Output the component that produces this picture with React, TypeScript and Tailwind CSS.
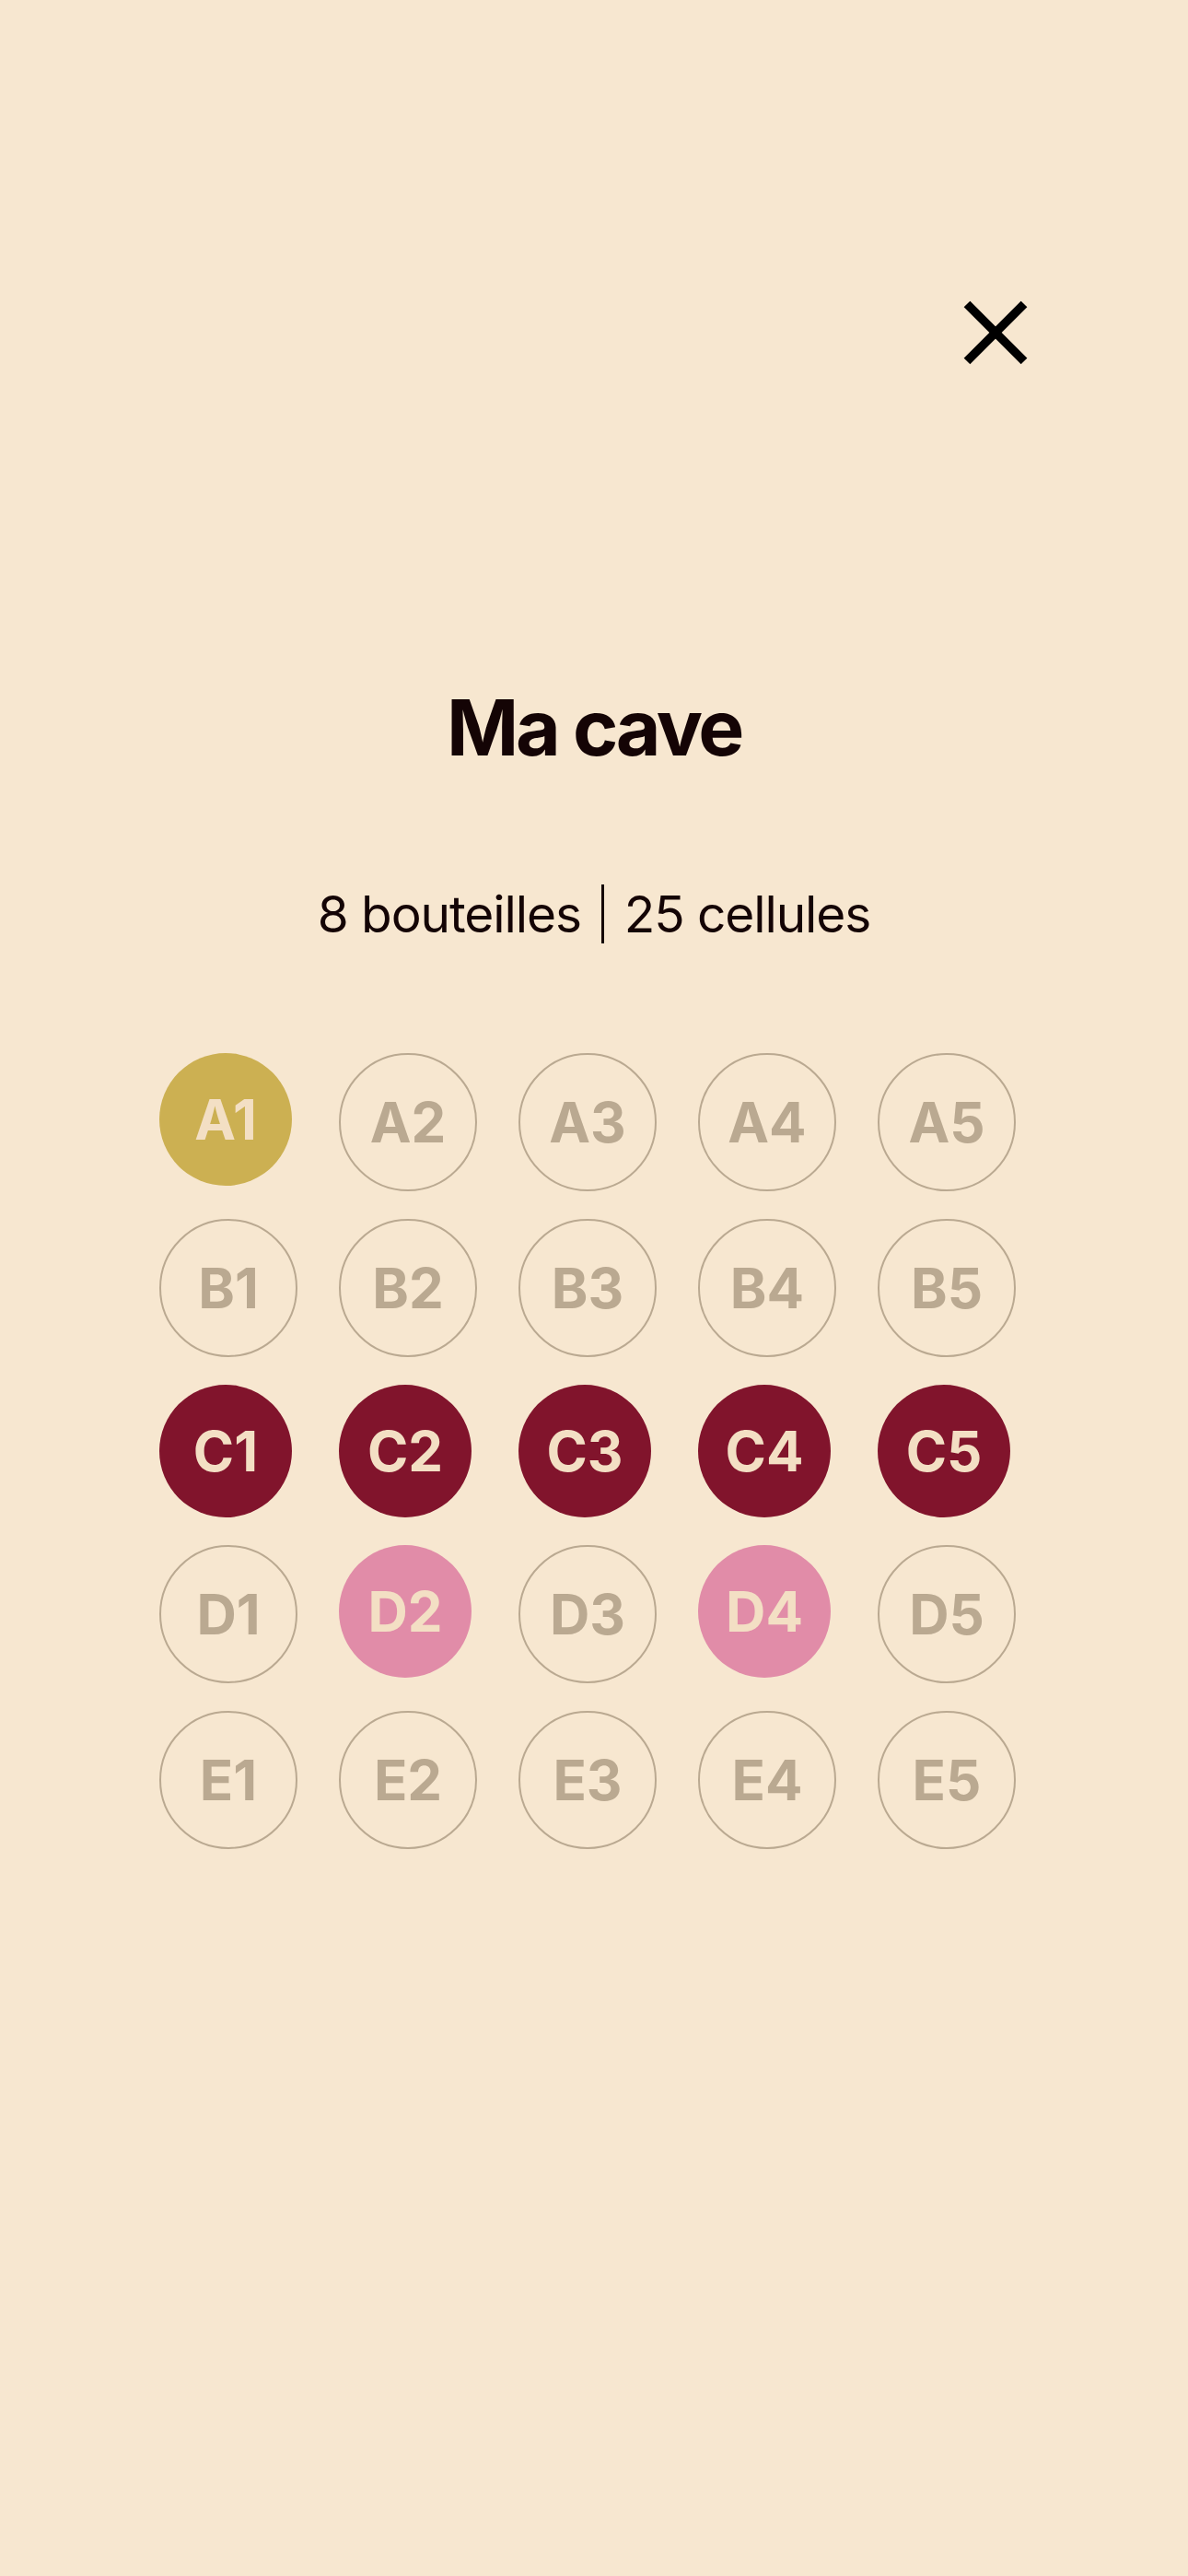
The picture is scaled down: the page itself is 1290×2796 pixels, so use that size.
import { useState } from "react";

type Cell = { id: string; kind: "empty" | "gold" | "wine" | "rose" };

const rows = ["A", "B", "C", "D", "E"];

const filled: Record<string, Cell["kind"]> = {
  A1: "gold",
  C1: "wine",
  C2: "wine",
  C3: "wine",
  C4: "wine",
  C5: "wine",
  D2: "rose",
  D4: "rose",
};

const cells: Cell[] = rows.flatMap(r =>
  [1, 2, 3, 4, 5].map(n => {
    const id = `${r}${n}`;
    return { id, kind: filled[id] ?? "empty" };
  })
);

const kindClass: Record<Cell["kind"], string> = {
  empty: "w-[150px] h-[150px] border-2 border-[#baa991] text-[#baa991]",
  gold: "w-[144px] h-[144px] bg-[#ccb052] text-[#f3dfc4]",
  wine: "w-[144px] h-[144px] bg-[#81142c] text-[#f3dfc4]",
  rose: "w-[144px] h-[144px] bg-[#e18ca8] text-[#f3dfc4]",
};

export default function App() {
  const [selected, setSelected] = useState<string | null>(null);
  const bottles = cells.filter(c => c.kind !== "empty").length;

  return (
    <div className="min-h-[2796px] w-full bg-[#f7e7d0] font-['Inter',sans-serif] text-[#140405]">
      {/* Fermer */}
      <div className="flex justify-end pt-[326px] pr-[174px]">
        <button aria-label="Fermer" className="w-[70px] h-[70px]">
          <svg width="70" height="70" viewBox="0 0 70 70" fill="none">
            <line x1="4" y1="4" x2="66" y2="66" stroke="#000" strokeWidth="9.5" />
            <line x1="66" y1="4" x2="4" y2="66" stroke="#000" strokeWidth="9.5" />
          </svg>
        </button>
      </div>

      <h1 className="mt-[352px] text-center text-[84px] leading-none font-bold tracking-[-0.04em]">Ma cave</h1>

      <div className="mt-[128px] flex items-center justify-center gap-[22px] text-[55px] leading-none tracking-[-0.02em]">
        <span>{bottles} bouteilles</span>
        <span className="w-[3px] h-[64px] bg-[#140405]" />
        <span>{cells.length} cellules</span>
      </div>

      <div className="mt-[119px] ml-[173px] w-[930px] grid grid-cols-5 gap-x-[45px] gap-y-[30px] items-start">
        {cells.map(c => (
          <button
            key={c.id}
            onClick={() => setSelected(c.id === selected ? null : c.id)}
            className={`rounded-full flex items-center justify-center text-[60px] font-bold leading-none ${kindClass[c.kind]}`}
          >
            {c.id}
          </button>
        ))}
      </div>
    </div>
  );
}
